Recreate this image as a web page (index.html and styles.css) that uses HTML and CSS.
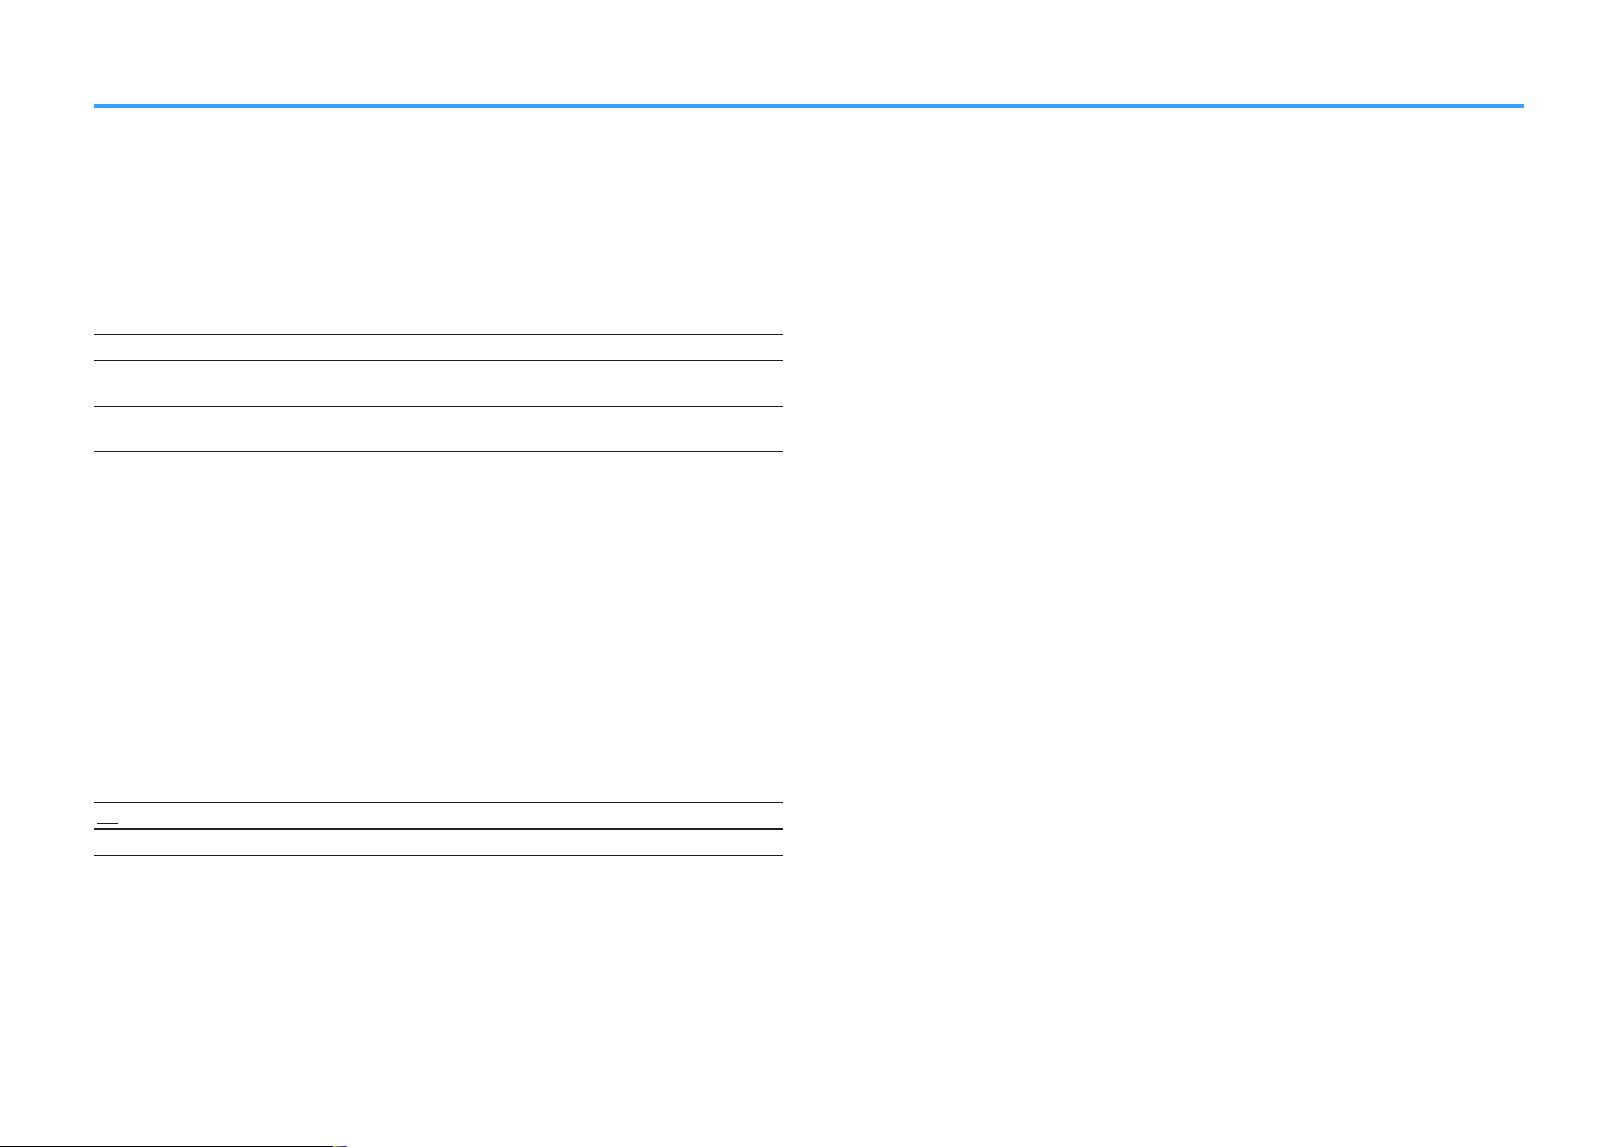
FILE: index.html
```html
<!DOCTYPE html>
<html lang="en">
<head>
<meta charset="utf-8">
<title>Page</title>
<link rel="stylesheet" href="styles.css">
</head>
<body>
<div class="page">
  <div class="top-rule"></div>
  <div class="table first">
    <div class="row r1"></div>
    <div class="row r2"></div>
    <div class="row r3"></div>
  </div>
  <div class="table second">
    <div class="row s1"><span class="mark"></span></div>
    <div class="row s2"></div>
  </div>
</div>
<div class="footer">
  <span class="foot-line"></span><span class="foot-bit"></span>
</div>
</body>
</html>
```
FILE: styles.css
```css
html, body {
  margin: 0;
  padding: 0;
  background: #fff;
  font-family: "Liberation Sans", Arial, sans-serif;
}
.page {
  padding: 104px 96px 0 94px;
}
.top-rule {
  height: 4px;
  width: 1430px;
  background: #389ffd;
}
.table {
  width: 689px;
  border-bottom: 1px solid #231f20;
}
.table.first {
  margin-top: 226px;
}
.table.second {
  margin-top: 350px;
}
.row {
  border-top: 1px solid #231f20;
  box-sizing: border-box;
  position: relative;
}
.r1 { height: 26px; }
.r2 { height: 46px; }
.r3 { height: 45px; }
.s1 {
  height: 26px;
  display: flex;
  align-items: flex-end;
  padding: 0 0 4px 3px;
}
.mark {
  display: block;
  width: 21px;
  height: 1px;
  background: #231f20;
}
.s2 {
  height: 27px;
  border-top: 2px solid #231f20;
}
.footer {
  margin-top: 289px;
  display: flex;
  align-items: flex-end;
  height: 2px;
}
.foot-line {
  display: block;
  width: 333px;
  height: 1px;
  background: #000;
}
.foot-bit {
  display: block;
  width: 14px;
  height: 1px;
  background: linear-gradient(90deg, #f2e600, #3a8a6a, #5a2f7a, #3e3ad0);
}
```
